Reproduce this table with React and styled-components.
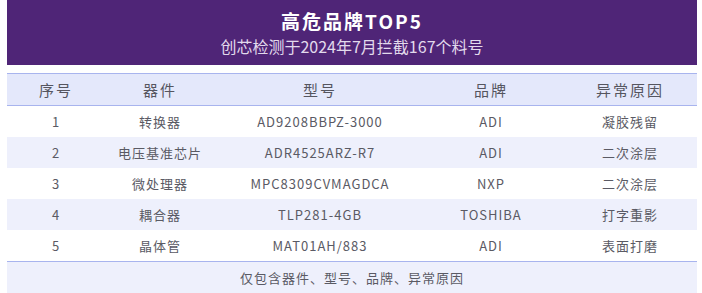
import React from "react";
import styled, { createGlobalStyle } from "styled-components";

const GlobalStyle = createGlobalStyle`
  body {
    margin: 0;
    background: #fff;
    font-family: "Noto Sans CJK SC", "Noto Sans", sans-serif;
  }
`;

const Wrapper = styled.div`
  width: 690px;
  margin-left: 7px;
`;

const Banner = styled.header`
  height: 65px;
  background-color: #4f2577;
  display: flex;
  flex-direction: column;
  align-items: center;
  padding-top: 7px;
  box-sizing: border-box;
  margin-bottom: 8px;
`;

const Title = styled.h1`
  margin: 0;
  font-size: 19px;
  line-height: 28px;
  font-weight: 700;
  letter-spacing: 2px;
  color: #fff;
`;

const Subtitle = styled.div`
  font-size: 16px;
  line-height: 22px;
  color: #e2daec;
`;

const Table = styled.div`
  display: flex;
  flex-direction: column;
`;

const Row = styled.div`
  display: grid;
  grid-template-columns: 98px 110px 210px 132px 140px;
  align-items: center;
  height: ${(p) => (p.$head ? "31px" : "31px")};
  background-color: ${(p) =>
    p.$head ? "#e4e8fb" : p.$shade ? "#eef0fc" : "#fff"};
  border-top: ${(p) => (p.$head ? "1px solid #a8b4ee" : "none")};
  border-bottom: ${(p) => (p.$head ? "1px solid #a8b4ee" : "none")};
`;

const Cell = styled.div`
  text-align: center;
  font-size: ${(p) => (p.$head ? "15px" : "13px")};
  letter-spacing: ${(p) => (p.$head ? "2px" : "1px")};
  color: ${(p) => (p.$head ? "#55555f" : "#5a5a64")};
  white-space: nowrap;
  &:last-child {
    padding-left: 6px;
  }
`;

const Footer = styled.div`
  height: 31px;
  display: flex;
  align-items: center;
  justify-content: center;
  background-color: #eef0fc;
  border-top: 1px solid #a8b4ee;
  border-bottom: 1px solid #a8b4ee;
  font-size: 13px;
  letter-spacing: 1px;
  color: #5a5a64;
`;

const headers = ["序号", "器件", "型号", "品牌", "异常原因"];

const rows = [
  ["1", "转换器", "AD9208BBPZ-3000", "ADI", "凝胶残留"],
  ["2", "电压基准芯片", "ADR4525ARZ-R7", "ADI", "二次涂层"],
  ["3", "微处理器", "MPC8309CVMAGDCA", "NXP", "二次涂层"],
  ["4", "耦合器", "TLP281-4GB", "TOSHIBA", "打字重影"],
  ["5", "晶体管", "MAT01AH/883", "ADI", "表面打磨"],
];

export default function App() {
  return (
    <Wrapper>
      <GlobalStyle />
      <Banner>
        <Title>高危品牌TOP5</Title>
        <Subtitle>创芯检测于2024年7月拦截167个料号</Subtitle>
      </Banner>
      <Table>
        <Row $head>
          {headers.map((h) => (
            <Cell $head key={h}>
              {h}
            </Cell>
          ))}
        </Row>
        {rows.map((r, i) => (
          <Row key={r[0]} $shade={i % 2 === 1}>
            {r.map((c, j) => (
              <Cell key={j}>{c}</Cell>
            ))}
          </Row>
        ))}
        <Footer>仅包含器件、型号、品牌、异常原因</Footer>
      </Table>
    </Wrapper>
  );
}
